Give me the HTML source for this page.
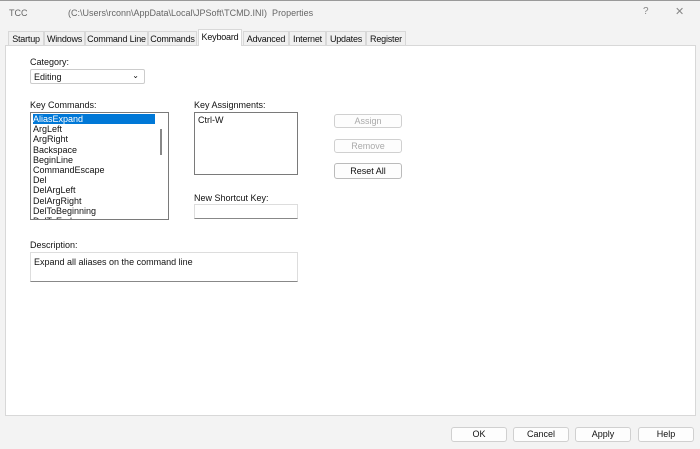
<!DOCTYPE html>
<html><head><style>
*{box-sizing:border-box}
body{margin:0;width:700px;height:449px;background:#f3f3f3;font-family:"Liberation Sans",sans-serif;font-size:9px;color:#111;position:relative;overflow:hidden}
.a{position:absolute;white-space:nowrap}
.tab{position:absolute;top:31px;height:14px;line-height:14px;text-align:center;border:1px solid #d8d8d8;border-bottom:none;background:#f0f0f0;white-space:nowrap;letter-spacing:-0.2px;overflow:hidden}
.box{position:absolute;background:#fff;border:1px solid #7a7a7a}
.btn{position:absolute;background:#fdfdfd;border:1px solid #d0d0d0;border-radius:3px;text-align:center;font-size:9px}
</style></head><body>
<div class="a" style="left:0;top:0;width:700px;height:1px;background:#999"></div>
<div class="a" style="left:9px;top:8px;color:#666">TCC</div>
<div class="a" style="left:68px;top:8px;color:#666">(C:\Users\rconn\AppData\Local\JPSoft\TCMD.INI)&nbsp; Properties</div>
<div class="a" style="left:643px;top:6px;color:#888;font-size:10px">?</div>
<div class="a" style="left:675px;top:5px;color:#888;font-size:11px">✕</div>
<div class="a" style="left:5px;top:45px;width:691px;height:371px;background:#fff;border:1px solid #d8d8d8"></div>
<div class="tab" style="left:8px;width:36px">Startup</div>
<div class="tab" style="left:44px;width:41px">Windows</div>
<div class="tab" style="left:85px;width:63px">Command Line</div>
<div class="tab" style="left:148px;width:49px">Commands</div>
<div class="tab" style="left:198px;width:44px;top:29px;height:17px;background:#fff">Keyboard</div>
<div class="tab" style="left:243px;width:46px">Advanced</div>
<div class="tab" style="left:289px;width:37px">Internet</div>
<div class="tab" style="left:326px;width:40px">Updates</div>
<div class="tab" style="left:366px;width:40px">Register</div>
<div class="a" style="left:30px;top:57px">Category:</div>
<div class="a" style="left:30px;top:69px;width:115px;height:15px;border:1px solid #ccc;border-radius:2px;padding:2px 0 0 3px">Editing<span style="position:absolute;right:5px;top:1px;font-size:8px">⌄</span></div>
<div class="a" style="left:30px;top:100px">Key Commands:</div>
<div class="box" style="left:30px;top:112px;width:139px;height:108px;line-height:10.2px;padding:1px 2px;overflow:hidden">
<div style="background:#0078d7;color:#fff;width:122px">AliasExpand</div>
<div>ArgLeft</div><div>ArgRight</div><div>Backspace</div><div>BeginLine</div><div>CommandEscape</div><div>Del</div><div>DelArgLeft</div><div>DelArgRight</div><div>DelToBeginning</div><div>DelToEnd</div>
<div style="position:absolute;left:129px;top:16px;width:2px;height:26px;background:#888"></div>
</div>
<div class="a" style="left:194px;top:100px">Key Assignments:</div>
<div class="box" style="left:194px;top:112px;width:104px;height:63px;padding:2px 3px">Ctrl-W</div>
<div class="a" style="left:194px;top:193px">New Shortcut Key:</div>
<div class="a" style="left:194px;top:204px;width:104px;height:15px;border:1px solid #ddd;border-bottom:1px solid #888"></div>
<div class="btn" style="left:334px;top:114px;width:68px;height:14px;line-height:12px;color:#aaa">Assign</div>
<div class="btn" style="left:334px;top:139px;width:68px;height:14px;line-height:12px;color:#aaa">Remove</div>
<div class="btn" style="left:334px;top:163px;width:68px;height:16px;line-height:14px;border-color:#bbb">Reset All</div>
<div class="a" style="left:30px;top:240px">Description:</div>
<div class="a" style="left:30px;top:252px;width:268px;height:30px;border:1px solid #ddd;border-bottom:1px solid #888;padding:4px 3px">Expand all aliases on the command line</div>
<div class="btn" style="left:451px;top:427px;width:56px;height:15px;line-height:13px">OK</div>
<div class="btn" style="left:513px;top:427px;width:56px;height:15px;line-height:13px">Cancel</div>
<div class="btn" style="left:575px;top:427px;width:56px;height:15px;line-height:13px">Apply</div>
<div class="btn" style="left:638px;top:427px;width:56px;height:15px;line-height:13px">Help</div>
</body></html>
